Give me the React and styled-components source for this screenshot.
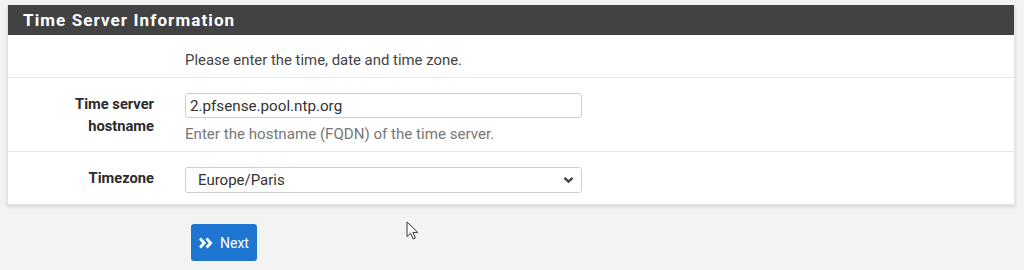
import React from "react";
import styled, { createGlobalStyle } from "styled-components";

const Global = createGlobalStyle`
  body {
    margin: 0;
    background: #f3f3f3;
    font-family: Roboto, "Liberation Sans", sans-serif;
    color: #333;
  }
`;

const App = () => {
  return (
    <Page>
      <Global />
      <Panel>
        <Heading>Time Server Information</Heading>
        <Row height={43}>
          <Label />
          <Intro>Please enter the time, date and time zone.</Intro>
        </Row>
        <Row height={74}>
          <Label>
            Time server
            <br />
            hostname
          </Label>
          <Control>
            <Input defaultValue="2.pfsense.pool.ntp.org" />
            <Help>Enter the hostname (FQDN) of the time server.</Help>
          </Control>
        </Row>
        <Row height={52} last>
          <Label>Timezone</Label>
          <Control>
            <SelectBox>
              <span>Europe/Paris</span>
              <svg width="11" height="8" viewBox="0 0 11 8">
                <path d="M1.5 1.8 L5.5 5.6 L9.5 1.8" fill="none" stroke="#444" strokeWidth="2.4" />
              </svg>
            </SelectBox>
          </Control>
        </Row>
      </Panel>
      <Footer>
        <Button>
          <svg width="16" height="12" viewBox="0 0 16 12">
            <path d="M2 1.5 L6.2 6 L2 10.5 M8.5 1.5 L12.7 6 L8.5 10.5" fill="none" stroke="#fff" strokeWidth="2.8" />
          </svg>
          Next
        </Button>
      </Footer>
      <Cursor width="14" height="20" viewBox="0 0 14 20">
        <path d="M1 1 L1 15.5 L4.6 12.2 L7.2 18 L9.4 17 L6.9 11.4 L11.8 11.4 Z" fill="#fff" stroke="#333" strokeWidth="1" strokeLinejoin="round" />
      </Cursor>
    </Page>
  );
};
export default App;

const Page = styled.div`
  position: relative;
  width: 1024px;
  height: 270px;
  padding: 5px 9px 0 7px;
  box-sizing: border-box;
`;
const Panel = styled.div`
  background: #fff;
  border: 1px solid #e2e2e2;
  border-top: none;
  box-shadow: 0 2px 4px rgba(0, 0, 0, 0.12);
`;
const Heading = styled.div`
  height: 30px;
  background: #424242;
  color: #fff;
  font-size: 17px;
  font-weight: 700;
  letter-spacing: 1.1px;
  padding-left: 15px;
  display: flex;
  align-items: center;
`;
const Row = styled.div`
  display: grid;
  grid-template-columns: 146px 1fr;
  column-gap: 31px;
  height: ${(p) => p.height}px;
  box-sizing: border-box;
  border-bottom: ${(p) => (p.last ? "none" : "1px solid #e6e6e6")};
`;
const Label = styled.div`
  text-align: right;
  font-size: 14.7px;
  font-weight: 700;
  line-height: 22px;
  padding-top: 15px;
  color: #2b2b2b;
`;
const Intro = styled.div`
  font-size: 14.9px;
  padding-top: 16px;
  color: #444;
`;
const Control = styled.div`
  padding-top: 15px;
`;
const Input = styled.input`
  display: block;
  width: 397px;
  height: 25px;
  box-sizing: border-box;
  border: 1px solid #cfcfcf;
  border-radius: 3px;
  padding: 0 4px;
  font-family: inherit;
  font-size: 15.2px;
  color: #333;
  outline: none;
`;
const Help = styled.div`
  margin-top: 7px;
  font-size: 15.1px;
  color: #777;
`;
const SelectBox = styled.div`
  width: 397px;
  height: 26px;
  box-sizing: border-box;
  border: 1px solid #cfcfcf;
  border-radius: 3px;
  padding: 0 7px 0 12px;
  display: flex;
  align-items: center;
  justify-content: space-between;
  font-size: 15px;
  color: #333;
`;
const Footer = styled.div`
  padding: 19px 0 0 184px;
`;
const Button = styled.button`
  height: 37px;
  width: 66px;
  border: none;
  border-radius: 3px;
  background: #1e76d2;
  color: #fff;
  font-family: inherit;
  font-size: 14px;
  display: flex;
  align-items: center;
  gap: 6px;
  padding: 0 0 0 7px;
`;
const Cursor = styled.svg`
  position: absolute;
  left: 406px;
  top: 221px;
`;
